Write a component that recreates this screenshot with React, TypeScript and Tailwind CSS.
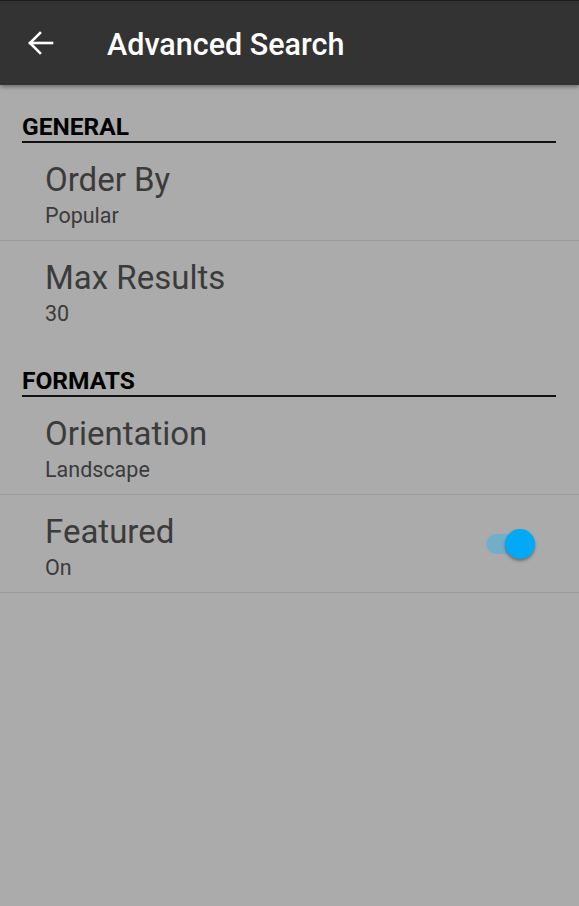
const Row = ({
  title,
  value,
  divider = true,
  toggle = false,
}: {
  title: string;
  value: string;
  divider?: boolean;
  toggle?: boolean;
}) => (
  <div
    className={`flex h-[98px] items-center justify-between pl-[45px] pr-[44px] ${
      divider ? "border-b border-[#9a9a9a]" : ""
    }`}
  >
    <div className="flex flex-col self-start pt-[19px]">
      <span className="text-[33px] leading-[36px] text-[#3b3b3b]">{title}</span>
      <span className="mt-[6px] text-[21.5px] leading-[24px] text-[#3b3b3b]">
        {value}
      </span>
    </div>
    {toggle && (
      <div className="relative h-[30px] w-[49px]">
        <div className="absolute left-0 top-[5px] h-[20px] w-[38px] rounded-full bg-[#74adc9]" />
        <div className="absolute right-0 top-0 h-[30px] w-[30px] rounded-full bg-[#03a9f4] shadow-[0_2px_3px_rgba(0,0,0,0.35)]" />
      </div>
    )}
  </div>
);

const Section = ({ label }: { label: string }) => (
  <div className="px-[22px] pr-[23px] pt-[28px]">
    <div className="text-[24.5px] font-bold leading-[28px] text-black">{label}</div>
    <div className="h-[2px] bg-[#111]" />
  </div>
);

export default function App() {
  return (
    <div
      className="flex h-[906px] w-[579px] flex-col bg-[#ababab]"
      style={{ fontFamily: "Roboto, 'Liberation Sans', sans-serif" }}
    >
      <header className="relative z-10 flex h-[85px] shrink-0 items-center border-t border-[#1f1f1f] bg-[#333333] shadow-[0_2px_4px_rgba(0,0,0,0.35)]">
        <svg
          width="36"
          height="36"
          viewBox="0 0 36 36"
          className="ml-[23px]"
          fill="none"
          stroke="white"
          strokeWidth="2.6"
          strokeLinecap="square"
        >
          <path d="M7 18H29" />
          <path d="M17 8L7 18L17 28" />
        </svg>
        <h1 className="ml-[48px] mt-[4px] text-[30.5px] font-medium leading-none text-white">
          Advanced Search
        </h1>
      </header>
      <Section label="GENERAL" />
      <Row title="Order By" value="Popular" />
      <Row title="Max Results" value="30" divider={false} />
      <Section label="FORMATS" />
      <Row title="Orientation" value="Landscape" />
      <Row title="Featured" value="On" toggle />
    </div>
  );
}
